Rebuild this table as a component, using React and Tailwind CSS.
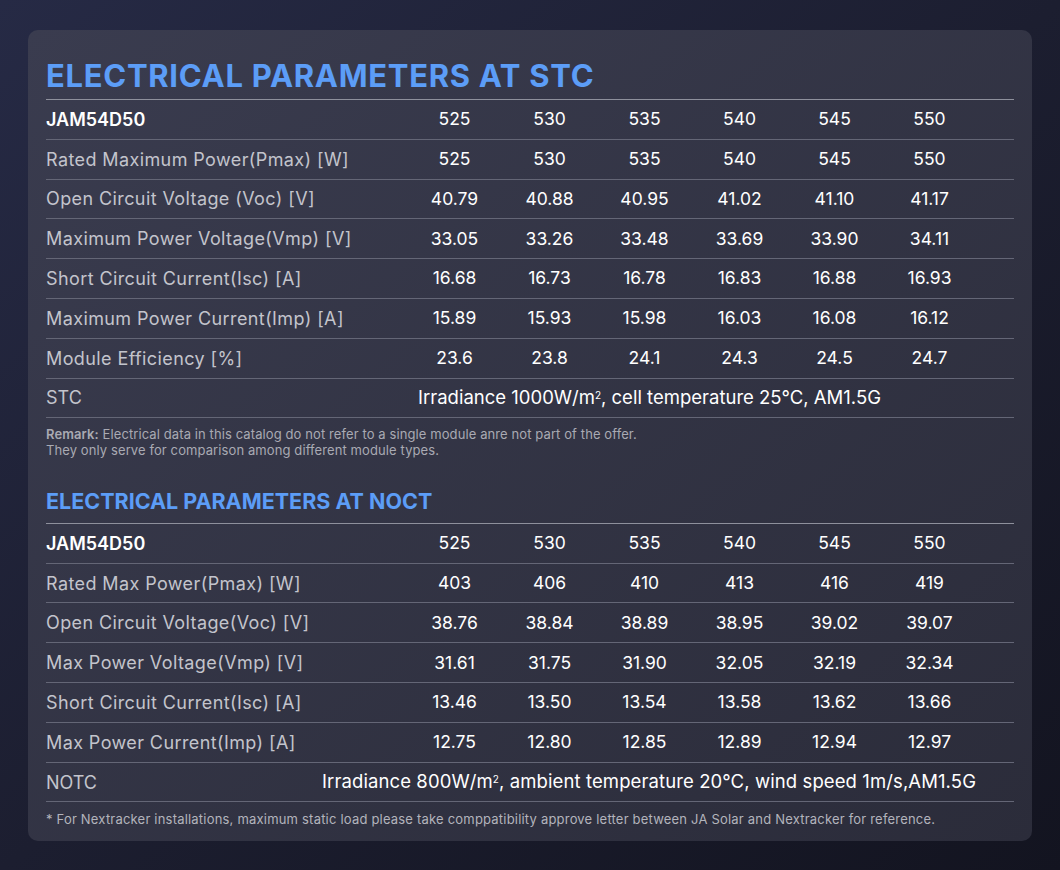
import React from 'react';

const models = ['525', '530', '535', '540', '545', '550'];

const stcRows = [
  ['Rated Maximum Power(Pmax) [W]', ['525', '530', '535', '540', '545', '550']],
  ['Open Circuit Voltage (Voc) [V]', ['40.79', '40.88', '40.95', '41.02', '41.10', '41.17']],
  ['Maximum Power Voltage(Vmp) [V]', ['33.05', '33.26', '33.48', '33.69', '33.90', '34.11']],
  ['Short Circuit Current(Isc) [A]', ['16.68', '16.73', '16.78', '16.83', '16.88', '16.93']],
  ['Maximum Power Current(Imp) [A]', ['15.89', '15.93', '15.98', '16.03', '16.08', '16.12']],
  ['Module Efficiency [%]', ['23.6', '23.8', '24.1', '24.3', '24.5', '24.7']],
];

const noctRows = [
  ['Rated Max Power(Pmax) [W]', ['403', '406', '410', '413', '416', '419']],
  ['Open Circuit Voltage(Voc) [V]', ['38.76', '38.84', '38.89', '38.95', '39.02', '39.07']],
  ['Max Power Voltage(Vmp) [V]', ['31.61', '31.75', '31.90', '32.05', '32.19', '32.34']],
  ['Short Circuit Current(Isc) [A]', ['13.46', '13.50', '13.54', '13.58', '13.62', '13.66']],
  ['Max Power Current(Imp) [A]', ['12.75', '12.80', '12.85', '12.89', '12.94', '12.97']],
];

const Row = ({ label, values, head }) => (
  <div className="grid grid-cols-[361px_repeat(6,95px)_1fr] h-[39.8px] items-center border-b border-[#646676]">
    <div
      className={
        head
          ? 'text-white font-semibold text-[18px]'
          : 'text-[#c3c4cc] text-[18px] tracking-[0.4px]'
      }
    >
      {label}
    </div>
    {values.map((v, i) => (
      <div key={i} className="text-center text-white text-[17.5px]">
        {v}
      </div>
    ))}
  </div>
);

const App = () => {
  return (
    <div
      className="min-h-screen w-full bg-gradient-to-br from-[#262a45] via-[#1c1e30] to-[#131420] pt-[30px] pl-[28px]"
      style={{ fontFamily: 'Inter, "Noto Sans", sans-serif' }}
    >
      <div className="w-[1004px] rounded-[10px] bg-gradient-to-br from-[#3a3c4f] to-[#2b2c3a] px-[18px] pt-[30px] pb-[14px]">
        <h1 className="text-[31px] font-bold leading-none text-[#5c9df7] tracking-[0.7px] pb-[8px] border-b border-[#8e909c]">
          ELECTRICAL PARAMETERS AT STC
        </h1>

        <Row label="JAM54D50" values={models} head />
        {stcRows.map(([label, values]) => (
          <Row key={label} label={label} values={values} />
        ))}
        <div className="grid grid-cols-[361px_1fr] h-[39.8px] items-center border-b border-[#646676]">
          <div className="text-[#c3c4cc] text-[18px]">STC</div>
          <div className="text-white pl-[11px] text-[18.5px]">
            Irradiance 1000W/m<sup className="text-[10px] leading-none">2</sup>, cell temperature 25°C, AM1.5G
          </div>
        </div>

        <div className="pt-[8px] text-[13px] tracking-[0.1px] leading-[16px] text-[#a9aab3]">
          <p>
            <span className="font-semibold">Remark:</span> Electrical data in this catalog do not refer to a single module anre not part of the offer.
          </p>
          <p>They only serve for comparison among different module types.</p>
        </div>

        <h2 className="mt-[33px] text-[21.5px] font-bold leading-none text-[#5c9df7] pb-[10px] border-b border-[#8e909c]">
          ELECTRICAL PARAMETERS AT NOCT
        </h2>

        <Row label="JAM54D50" values={models} head />
        {noctRows.map(([label, values]) => (
          <Row key={label} label={label} values={values} />
        ))}
        <div className="flex h-[39.8px] items-center border-b border-[#646676]">
          <div className="w-[276px] text-[#c3c4cc] text-[18px]">NOTC</div>
          <div className="text-white text-[18.5px] tracking-[0.1px]">
            Irradiance 800W/m<sup className="text-[10px] leading-none">2</sup>, ambient temperature 20°C, wind speed 1m/s,AM1.5G
          </div>
        </div>

        <p className="pt-[9px] text-[13px] tracking-[0.2px] leading-[16px] text-[#b3b4bc]">
          * For Nextracker installations, maximum static load please take comppatibility approve letter between JA Solar and Nextracker for reference.
        </p>
      </div>
    </div>
  );
};

export default App;
